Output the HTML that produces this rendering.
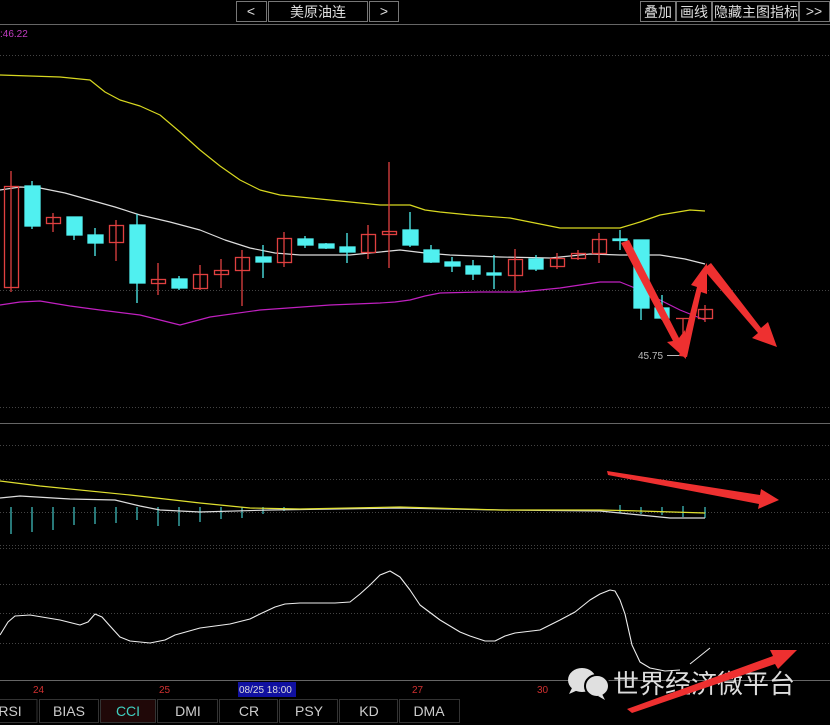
<!DOCTYPE html>
<html><head><meta charset="utf-8"><style>
html,body{margin:0;padding:0;background:#000;width:830px;height:725px;overflow:hidden}
svg{display:block}
text{font-family:"Liberation Sans","Noto Sans CJK SC",sans-serif}
</style></head><body>
<svg width="830" height="725" viewBox="0 0 830 725" xmlns="http://www.w3.org/2000/svg">
<rect width="830" height="725" fill="#000"/>
<g fill="#000" stroke="#777" stroke-width="1">
<rect x="236.5" y="1.5" width="30" height="20"/>
<rect x="268.5" y="1.5" width="99" height="20"/>
<rect x="369.5" y="1.5" width="29" height="20"/>
<rect x="640.5" y="1.5" width="35" height="20"/>
<rect x="676.5" y="1.5" width="35" height="20"/>
<rect x="712.5" y="1.5" width="86" height="20"/>
<rect x="799.5" y="1.5" width="30" height="20"/>
</g>
<g fill="#ddd" font-size="14">
<text x="251" y="16" text-anchor="middle">&lt;</text>
<text x="318" y="17" text-anchor="middle">美原油连</text>
<text x="384" y="16" text-anchor="middle">&gt;</text>
<text x="658" y="17" text-anchor="middle">叠加</text>
<text x="694" y="17" text-anchor="middle">画线</text>
<text x="756" y="17" text-anchor="middle">隐藏主图指标</text>
<text x="814" y="16" text-anchor="middle">&gt;&gt;</text>
</g>
<line x1="0" y1="24.5" x2="830" y2="24.5" stroke="#666"/>
<text x="0" y="37" fill="#c03cc0" font-size="10">:46.22</text>
<g stroke="#444" stroke-dasharray="1,2">
<line x1="0" y1="55.5" x2="830" y2="55.5"/>
<line x1="0" y1="290.5" x2="830" y2="290.5"/>
<line x1="0" y1="407.5" x2="830" y2="407.5"/>
<line x1="0" y1="445.5" x2="830" y2="445.5"/>
<line x1="0" y1="479.5" x2="830" y2="479.5"/>
<line x1="0" y1="512.5" x2="830" y2="512.5"/>
<line x1="0" y1="545.5" x2="830" y2="545.5"/>
<line x1="0" y1="548.5" x2="830" y2="548.5"/>
<line x1="0" y1="584.5" x2="830" y2="584.5"/>
<line x1="0" y1="613.5" x2="830" y2="613.5"/>
<line x1="0" y1="643.5" x2="830" y2="643.5"/>
</g>
<line x1="0" y1="423.5" x2="830" y2="423.5" stroke="#666"/>
<line x1="0" y1="680.5" x2="830" y2="680.5" stroke="#666"/>
<g fill="none" stroke-width="1.2" stroke-linejoin="round">
<polyline stroke="#d8d820" points="0,75 60,77 90,80 105,92 120,100 140,106 160,115 180,132 200,150 220,166 240,180 260,190 280,195 330,200 380,205 410,205 425,210 440,212 470,215 510,218 535,223 560,228 620,228 640,222 660,215 690,210 705,211"/>
<polyline stroke="#ddd" points="0,190 20,187 40,188 65,193 90,200 115,207 140,215 170,222 200,230 225,240 250,248 275,253 300,255 350,255 380,252 400,250 425,253 450,255 500,257 550,258 590,254 620,255 660,255 685,259 705,264"/>
<polyline stroke="#c020c0" points="0,305 20,302 40,301 70,306 100,310 140,315 160,320 180,325 195,321 210,317 260,310 330,305 380,303 395,302 410,300 425,296 440,293 480,292 520,292 560,288 580,285 600,282 620,282 635,288 650,295 680,310 705,320"/>
</g>
<g stroke-width="1.3">
<g stroke="#e04040" fill="none">
<line x1="11" y1="171" x2="11" y2="292"/><rect x="4.5" y="186.5" width="14" height="101"/>
<line x1="53" y1="213" x2="53" y2="232"/><rect x="46.5" y="217.5" width="14" height="6"/>
<line x1="116" y1="220" x2="116" y2="261"/><rect x="109.5" y="225.5" width="14" height="17"/>
<line x1="158" y1="263" x2="158" y2="295"/><rect x="151.5" y="279.5" width="14" height="4"/>
<line x1="200" y1="265" x2="200" y2="290"/><rect x="193.5" y="274.5" width="14" height="14"/>
<line x1="221" y1="259" x2="221" y2="288"/><rect x="214.5" y="270.5" width="14" height="4"/>
<line x1="242" y1="250" x2="242" y2="306"/><rect x="235.5" y="257.5" width="14" height="13"/>
<line x1="284" y1="232" x2="284" y2="267"/><rect x="277.5" y="238.5" width="14" height="24"/>
<line x1="368" y1="225" x2="368" y2="259"/><rect x="361.5" y="234.5" width="14" height="18"/>
<line x1="389" y1="162" x2="389" y2="268"/><rect x="382.5" y="231.5" width="14" height="3"/>
<line x1="515" y1="249" x2="515" y2="291"/><rect x="508.5" y="259.5" width="14" height="16"/>
<line x1="557" y1="253" x2="557" y2="269"/><rect x="550.5" y="258.5" width="14" height="8"/>
<line x1="578" y1="250" x2="578" y2="260"/><rect x="571.5" y="253.5" width="14" height="5"/>
<line x1="599" y1="233" x2="599" y2="263"/><rect x="592.5" y="239.5" width="14" height="14"/>
<line x1="683" y1="318" x2="683" y2="356"/><line x1="676" y1="318.5" x2="691" y2="318.5"/>
<line x1="705" y1="305" x2="705" y2="322"/><rect x="698.5" y="309.5" width="14" height="9"/>
</g>
<g stroke="#50f0f0" fill="#50f0f0">
<line x1="32" y1="181" x2="32" y2="229"/><rect x="25" y="186" width="15" height="40"/>
<line x1="74" y1="217" x2="74" y2="240"/><rect x="67" y="217" width="15" height="18"/>
<line x1="95" y1="228" x2="95" y2="256"/><rect x="88" y="235" width="15" height="8"/>
<line x1="137" y1="214" x2="137" y2="303"/><rect x="130" y="225" width="15" height="58"/>
<line x1="179" y1="276" x2="179" y2="290"/><rect x="172" y="279" width="15" height="9"/>
<line x1="263" y1="245" x2="263" y2="278"/><rect x="256" y="257" width="15" height="5"/>
<line x1="305" y1="236" x2="305" y2="248"/><rect x="298" y="239" width="15" height="6"/>
<line x1="326" y1="243" x2="326" y2="249"/><rect x="319" y="244" width="15" height="4"/>
<line x1="347" y1="233" x2="347" y2="263"/><rect x="340" y="247" width="15" height="5"/>
<line x1="410" y1="212" x2="410" y2="247"/><rect x="403" y="230" width="15" height="15"/>
<line x1="431" y1="245" x2="431" y2="263"/><rect x="424" y="250" width="15" height="12"/>
<line x1="452" y1="257" x2="452" y2="272"/><rect x="445" y="262" width="15" height="4"/>
<line x1="473" y1="260" x2="473" y2="280"/><rect x="466" y="266" width="14" height="8"/>
<line x1="494" y1="255" x2="494" y2="289"/><rect x="487" y="273" width="14" height="2"/>
<line x1="536" y1="255" x2="536" y2="271"/><rect x="529" y="259" width="14" height="10"/>
<line x1="620" y1="230" x2="620" y2="250"/><rect x="613" y="239" width="14" height="1.5"/>
<line x1="641" y1="240" x2="641" y2="320"/><rect x="634" y="240" width="15" height="68"/>
<line x1="662" y1="295" x2="662" y2="320"/><rect x="655" y="308" width="14" height="10"/>
</g>
</g>
<text x="638" y="359" fill="#bbb" font-size="10">45.75</text>
<line x1="667" y1="355.5" x2="683" y2="355.5" stroke="#bbb"/>
<g stroke="#50f0f0" stroke-width="1">
<line x1="11" y1="507" x2="11" y2="534"/><line x1="32" y1="507" x2="32" y2="532"/><line x1="53" y1="507" x2="53" y2="530"/><line x1="74" y1="507" x2="74" y2="525"/><line x1="95" y1="507" x2="95" y2="524"/><line x1="116" y1="507" x2="116" y2="523"/><line x1="137" y1="507" x2="137" y2="520"/><line x1="158" y1="507" x2="158" y2="526"/><line x1="179" y1="507" x2="179" y2="526"/><line x1="200" y1="507" x2="200" y2="522"/><line x1="221" y1="507" x2="221" y2="519"/><line x1="242" y1="507" x2="242" y2="518"/><line x1="263" y1="507" x2="263" y2="514"/><line x1="284" y1="507" x2="284" y2="511"/><line x1="620" y1="505" x2="620" y2="513"/><line x1="641" y1="507" x2="641" y2="514"/><line x1="662" y1="507" x2="662" y2="515"/><line x1="683" y1="506" x2="683" y2="517"/><line x1="705" y1="507" x2="705" y2="518"/>
</g>
<g fill="none" stroke-width="1.2" stroke-linejoin="round">
<polyline stroke="#ddd" points="0,498 20,496 70,499 115,500 140,506 160,510 200,512 270,510 400,508 500,510 600,511 640,515 670,518 705,518"/>
<polyline stroke="#e0e030" points="0,481 40,486 130,495 200,503 250,508 300,509 400,507 500,510 600,510 640,511 705,513"/>
</g>
<polyline fill="none" stroke="#eee" stroke-width="1.1" stroke-linejoin="round" points="0,635 8,622 15,616 30,615 60,620 80,625 88,622 95,614 102,617 110,626 120,637 130,641 150,643 165,640 175,635 200,628 230,624 250,619 260,614 275,607 285,604 300,603 320,603 335,603 350,602 360,594 370,585 380,575 390,571 400,577 410,590 420,605 440,620 460,632 470,636 485,641 495,641 505,636 515,633 540,630 560,620 575,612 590,600 600,594 610,590 615,591 620,600 625,614 632,645 640,662 650,668 665,671 680,670"/>
<line x1="690" y1="664" x2="710" y2="648" stroke="#eee" stroke-width="1"/>
<g font-size="10" fill="#d03030">
<text x="33" y="693">24</text><text x="159" y="693">25</text><text x="412" y="693">27</text><text x="537" y="693">30</text>
</g>
<rect x="238" y="682" width="58" height="15" fill="#1010a0"/>
<text x="239" y="693" fill="#ddd" font-size="10">08/25 18:00</text>
<rect x="0" y="698" width="830" height="27" fill="#000"/>
<g stroke="#333" fill="#000">
<rect x="-1" y="699.5" width="38" height="23"/><rect x="39.5" y="699.5" width="59" height="23"/><rect x="100.5" y="699.5" width="55" height="23" fill="#200808"/><rect x="157.5" y="699.5" width="60" height="23"/><rect x="219.5" y="699.5" width="58" height="23"/><rect x="279.5" y="699.5" width="58" height="23"/><rect x="339.5" y="699.5" width="58" height="23"/><rect x="399.5" y="699.5" width="60" height="23"/>
</g>
<g font-size="14" fill="#ccc" text-anchor="middle">
<text x="10" y="716">RSI</text><text x="69" y="716">BIAS</text><text x="128" y="716" fill="#40d0c0">CCI</text><text x="188" y="716">DMI</text><text x="249" y="716">CR</text><text x="309" y="716">PSY</text><text x="369" y="716">KD</text><text x="429" y="716">DMA</text>
</g>
<g fill="#e0e0e0">
<ellipse cx="582" cy="680" rx="14" ry="12"/><path d="M572,688 L569,694 L578,690Z"/>
<ellipse cx="597" cy="686" rx="12" ry="11" stroke="#000" stroke-width="2"/><path d="M602,694 L605,700 L598,696Z"/>
</g>
<text x="613" y="693" fill="#ddd" font-size="26">世界经济微平台</text>
<g fill="#ee3030">
<polygon points="621,243 629,240 679,338 685,330 686,359 667,342 673,341"/>
<polygon points="679,356 687,357 701,292 707,294 707,263 691,285 697,287"/>
<polygon points="703,269 711,263 761,328 768,322 777,347 752,338 758,333"/>
<polygon points="607,471 608,475 759,504 758,509 779,500 761,489 760,495"/>
<polygon points="627,709 632,713 775,664 778,669 797,650 770,650 773,656"/>
</g>
</svg>
</body></html>
